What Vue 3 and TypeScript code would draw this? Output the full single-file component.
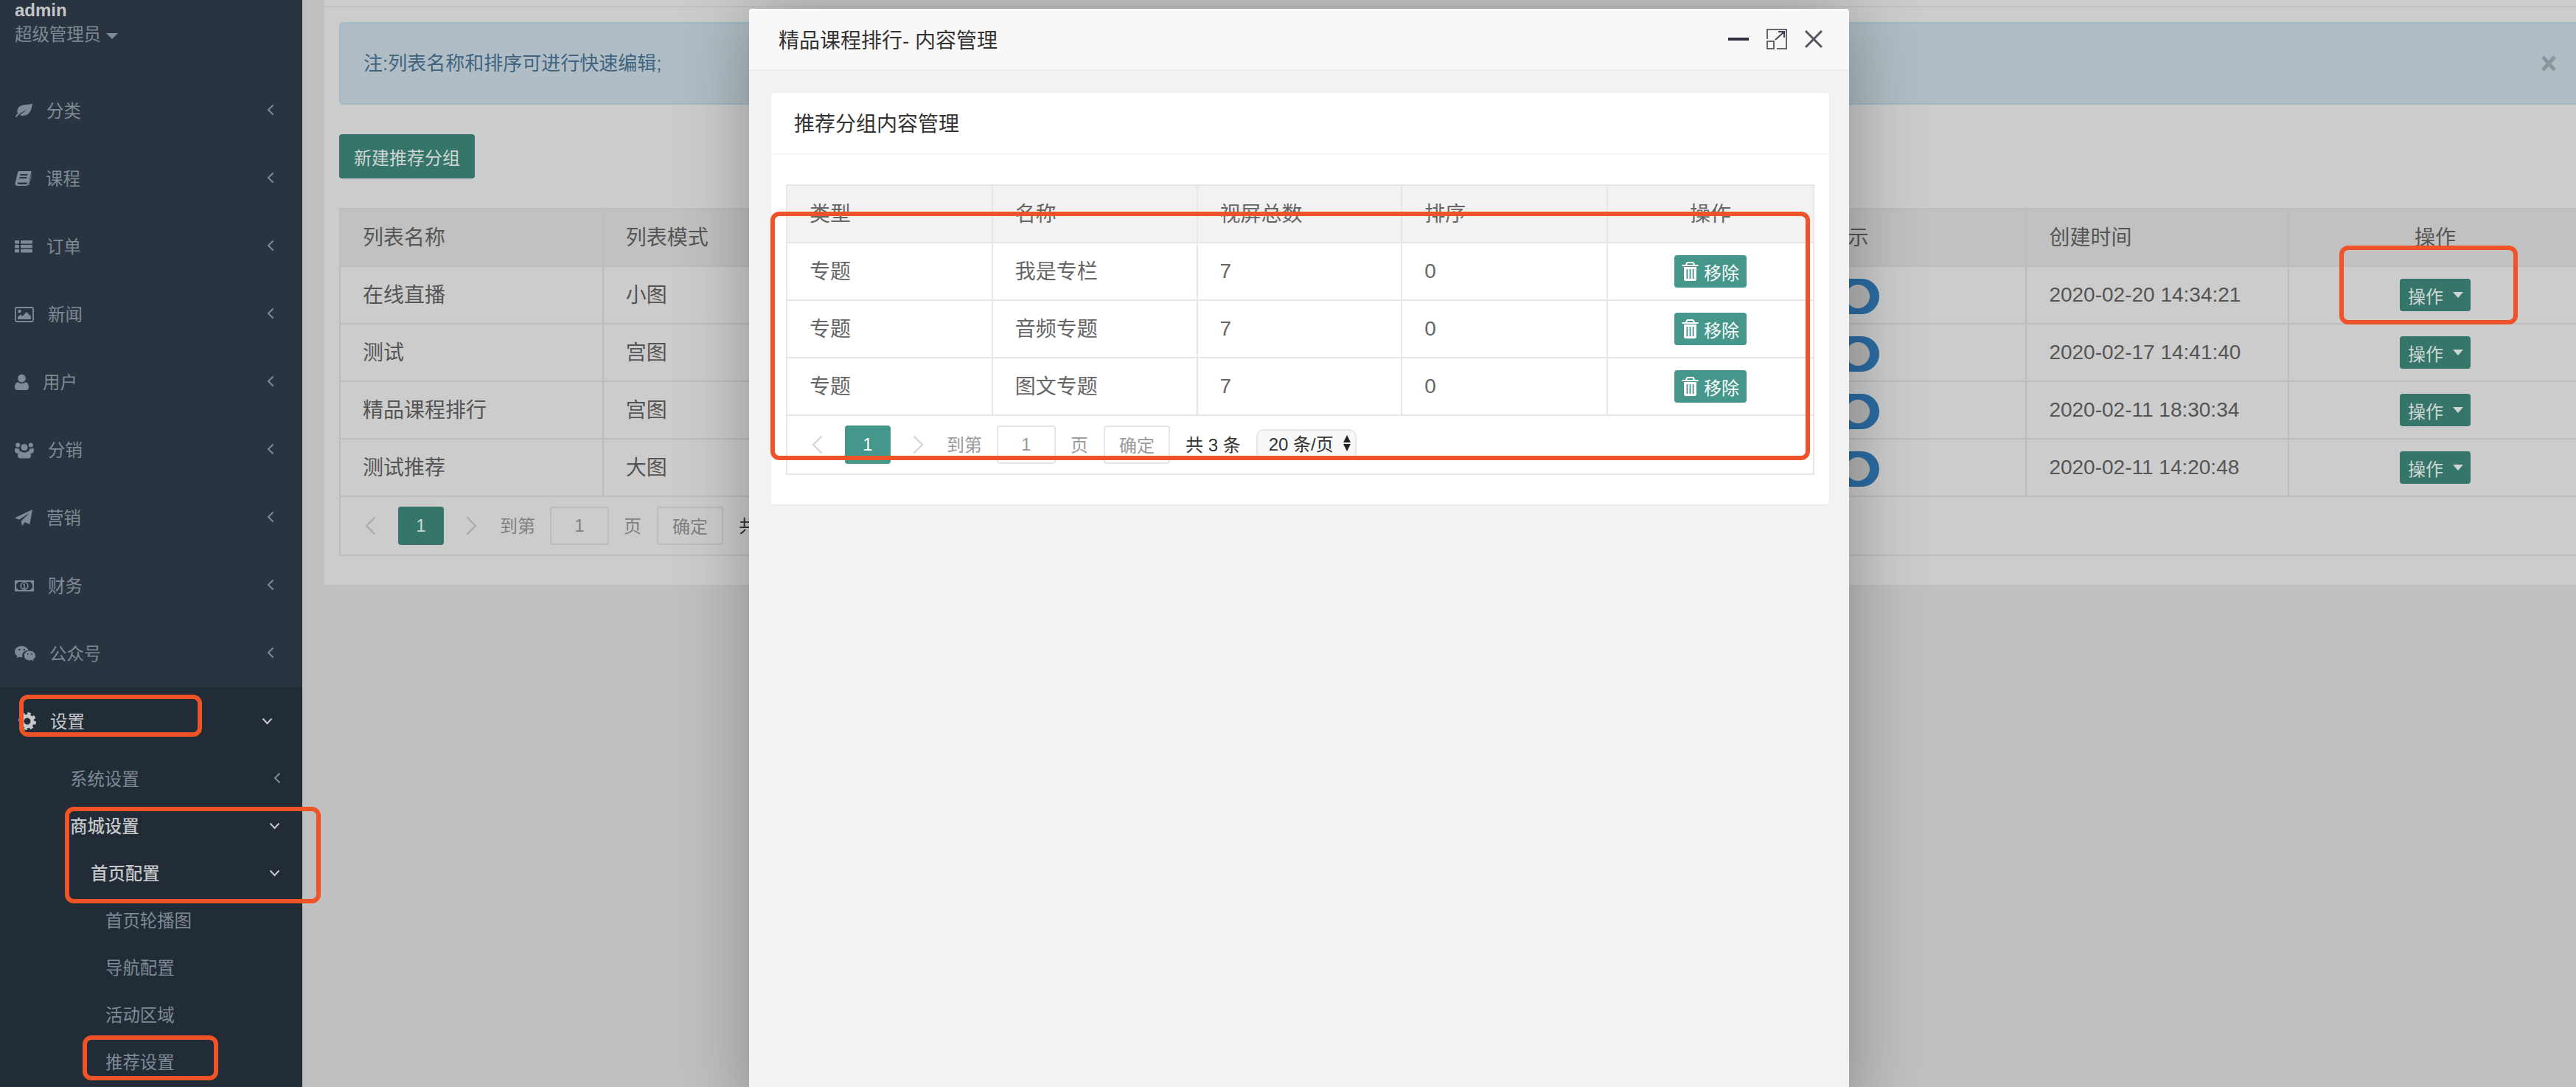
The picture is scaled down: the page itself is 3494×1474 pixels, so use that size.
<script setup lang="ts">
// 左侧菜单
const menus = [
  { name: '分类', icon: 'leaf', w: 24 },
  { name: '课程', icon: 'book', w: 23 },
  { name: '订单', icon: 'list', w: 24 },
  { name: '新闻', icon: 'image', w: 26 },
  { name: '用户', icon: 'user', w: 19 },
  { name: '分销', icon: 'users', w: 26 },
  { name: '营销', icon: 'send', w: 24 },
  { name: '财务', icon: 'money', w: 26 },
  { name: '公众号', icon: 'wechat', w: 28 },
]

const leafMenus = ['首页轮播图', '导航配置', '活动区域', '推荐设置']

const groups = [
  { name: '在线直播', mode: '小图', time: '2020-02-20 14:34:21' },
  { name: '测试', mode: '宫图', time: '2020-02-17 14:41:40' },
  { name: '精品课程排行', mode: '宫图', time: '2020-02-11 18:30:34' },
  { name: '测试推荐', mode: '大图', time: '2020-02-11 14:20:48' },
]

const contents = [
  { type: '专题', name: '我是专栏', total: 7, sort: 0 },
  { type: '专题', name: '音频专题', total: 7, sort: 0 },
  { type: '专题', name: '图文专题', total: 7, sort: 0 },
]
</script>

<template>
  <div class="page">
    <aside class="sidebar">
      <div class="profile">
        <div class="admin">admin</div>
        <div class="role">超级管理员<i class="caret"></i></div>
      </div>

      <ul class="menu">
        <li v-for="m in menus" :key="m.name" class="menu-item">
          <svg class="icon" :width="m.w" height="26" :viewBox="`0 0 ${m.w} 26`" fill="#7f8a96">
            <template v-if="m.icon === 'leaf'">
              <path d="M24 3c-1 1-2 1.3-4.500 1.500C12 5 5 5.500 3.500 12.500c-.3 1.500 0 3.200.7 4.400C2.900 18 1.600 19.400.6 21l1.800 1c.9-1.600 2.200-3 3.600-4.100 4-3.200 8-4.600 11-7.400-3 3.900-7 5.600-10 8.600 1 .6 2.300.9 3.900.9 8 0 12.600-7 13-16.900z" />
            </template>
            <template v-else-if="m.icon === 'book'">
              <path fill-rule="evenodd" d="M6 3h15.500c.8 0 1.200.7 1 1.500l-3.700 15c-.5 2-1.600 3.500-3.800 3.500H3.500C1.500 23 0 21.500.5 19.500L4 5c.3-1.200 1-2 2-2zm1.500 4-.5 2h10l.5-2zm-1 4-.5 2h10l.5-2zM4 18.500c-.5 1.500.2 2.500 1.500 2.500h9.300c1.400 0 2-.8 2.300-2 .1-.3.1-.5.2-.5z" />
              <path d="M22.700 7.500 23 8l-3 12.500c-.4 1.500-1.500 2.500-2.800 2.500 1-.6 1.500-1.500 1.800-2.800z" />
            </template>
            <template v-else-if="m.icon === 'list'">
              <rect x="0" y="5" width="6" height="4.500" rx="1" />
              <rect x="8" y="5" width="16" height="4.500" rx="1" />
              <rect x="0" y="11" width="6" height="4.500" rx="1" />
              <rect x="8" y="11" width="16" height="4.500" rx="1" />
              <rect x="0" y="17" width="6" height="4.500" rx="1" />
              <rect x="8" y="17" width="16" height="4.500" rx="1" />
            </template>
            <template v-else-if="m.icon === 'image'">
              <rect x="1" y="4" width="24" height="19" rx="1.500" fill="none" stroke="#7f8a96" stroke-width="1.800" />
              <circle cx="6.500" cy="9" r="2.300" />
              <path d="M4 20v-3l4-3.500 2.500 2.300L16 10l6 6v4z" />
            </template>
            <template v-else-if="m.icon === 'user'">
              <circle cx="9.500" cy="8" r="5.400" />
              <path d="M0 20.500c0-4 1.500-7 4.500-7.200 1.400 1.200 3 1.800 5 1.800s3.600-.6 5-1.800c3 .2 4.500 3.200 4.500 7.200 0 2.200-1.400 3.500-3.500 3.500h-12C1.400 24 0 22.700 0 20.500z" />
            </template>
            <template v-else-if="m.icon === 'users'">
              <circle cx="4.200" cy="6.500" r="3" />
              <circle cx="21.800" cy="6.500" r="3" />
              <circle cx="13" cy="9.500" r="4.600" />
              <path d="M0 13.500c0-2 .8-3 2-3 .6.600 1.400 1 2.500 1 .5 0 1-.1 1.500-.3-.2 1.500.4 2.800 1.300 3.800-1.300.6-2 1.500-2.500 3C2 18 0 16.500 0 13.500zM26 13.500c0-2-.8-3-2-3-.6.600-1.400 1-2.500 1-.5 0-1-.1-1.500-.3.200 1.500-.4 2.800-1.300 3.800 1.300.6 2 1.500 2.500 3 2.800 0 4.800-1.500 4.800-4.500z" />
              <path d="M4 21c0-3.500 1.500-6 4.500-6 1.200 1 2.700 1.500 4.500 1.500s3.300-.5 4.500-1.500c3 0 4.500 2.500 4.500 6 0 2.300-1.400 3.500-3.500 3.500h-11C5.400 24.500 4 23.300 4 21z" />
            </template>
            <template v-else-if="m.icon === 'send'">
              <path d="M24 2 20.300 22l-6.800-3L10.200 24.500 8.600 17.800 20 6.500 6 15.800 0 13.200z" />
            </template>
            <template v-else-if="m.icon === 'money'">
              <path fill-rule="evenodd" d="M0 6h26v15H0zm5 2-3 3v5l3 3h16l3-3v-5l-3-3z" />
              <circle cx="13" cy="13.500" r="4.800" fill="none" stroke="#7f8a96" stroke-width="1.600" />
              <path d="M12.400 10.500h1.300v5.600h1v1h-3.300v-1h1v-4l-1 .6v-1.100z" />
            </template>
            <template v-else-if="m.icon === 'wechat'">
              <path fill-rule="evenodd" d="M9.500 3C4.300 3 0 6.400 0 10.700c0 2.500 1.400 4.500 3.600 6l-.9 2.700 3.200-1.600c1.200.3 2.300.5 3.600.5l.9-.1c-.2-.7-.3-1.400-.3-2.100 0-4 3.500-7.200 8-7.200h.9C17.100 5.600 13.600 3 9.500 3zM6.300 6.700a1.200 1.200 0 1 1 0 2.400 1.200 1.200 0 0 1 0-2.400zm6.500 0a1.200 1.200 0 1 1 0 2.400 1.200 1.200 0 0 1 0-2.400z" />
              <path fill-rule="evenodd" d="M28 16c0-3.600-3.600-6.500-7.600-6.500-4.300 0-7.700 2.900-7.700 6.500s3.400 6.500 7.700 6.500c.9 0 1.800-.2 2.700-.5l2.500 1.400-.7-2.300c2.100-1.300 3.600-3.500 3.600-5.100zm-10.200-1.200a1 1 0 1 1 0-2 1 1 0 0 1 0 2zm5.100 0a1 1 0 1 1 0-2 1 1 0 0 1 0 2z" />
            </template>
          </svg>
          <span class="menu-text">{{ m.name }}</span>
          <svg class="chev" width="10" height="16" viewBox="0 0 10 16"><path d="M8.500 1.500 2 8l6.500 6.500" /></svg>
        </li>

        <li class="open-group">
          <div class="menu-item active">
            <svg class="icon" width="29" height="26" viewBox="0 0 29 26">
              <circle cx="17" cy="13" r="7" fill="none" stroke="#c6c8ca" stroke-width="5" />
              <circle cx="17" cy="13" r="10" fill="none" stroke="#c6c8ca" stroke-width="4" stroke-dasharray="4.200 3.650" />
            </svg>
            <span class="menu-text">设置</span>
            <svg class="chev-down top" width="15" height="10" viewBox="0 0 15 10"><path d="M1.500 1.500 7.500 8l6-6.500" /></svg>
          </div>
          <div class="sub-item lv2">
            <span>系统设置</span>
            <svg class="chev sub" width="10" height="16" viewBox="0 0 10 16"><path d="M8.500 1.500 2 8l6.500 6.500" /></svg>
          </div>
          <div class="sub-item lv2 on">
            <span>商城设置</span>
            <svg class="chev-down" width="15" height="10" viewBox="0 0 15 10"><path d="M1.500 1.500 7.500 8l6-6.500" /></svg>
          </div>
          <div class="sub-item lv3 on">
            <span>首页配置</span>
            <svg class="chev-down" width="15" height="10" viewBox="0 0 15 10"><path d="M1.500 1.500 7.500 8l6-6.500" /></svg>
          </div>
          <div v-for="s in leafMenus" :key="s" class="sub-item lv4"><span>{{ s }}</span></div>
        </li>
      </ul>
    </aside>

    <main class="main">
      <section class="card">
        <div class="card-top"></div>
        <div class="alert">
          <span class="alert-text">注:列表名称和排序可进行快速编辑;</span>
          <svg width="22" height="22" viewBox="0 0 22 22" class="alert-close"><path d="M3 2l16 18M19 2 3 20" /></svg>
        </div>
        <button class="btn-new">新建推荐分组</button>

        <table class="grid dim">
          <colgroup>
            <col style="width: 357px" />
            <col style="width: 1575px" />
            <col style="width: 357px" />
            <col style="width: 356px" />
            <col style="width: 398px" />
          </colgroup>
          <thead>
            <tr>
              <th>列表名称</th>
              <th>列表模式</th>
              <th>是否显示</th>
              <th>创建时间</th>
              <th class="center">操作</th>
            </tr>
          </thead>
          <tbody>
            <tr v-for="g in groups" :key="g.time">
              <td>{{ g.name }}</td>
              <td>{{ g.mode }}</td>
              <td class="switch-cell"><span class="switch"><i></i></span></td>
              <td class="num">{{ g.time }}</td>
              <td class="center"><button class="btn-op">操作<i class="op-caret"></i></button></td>
            </tr>
          </tbody>
        </table>
        <div class="pager dim">
          <svg class="pg-chev prev" width="15" height="26" viewBox="0 0 15 26"><path d="M13.500 1.500 2 13l11.500 11.500" /></svg>
          <span class="pg-cur">1</span>
          <svg class="pg-chev next" width="15" height="26" viewBox="0 0 15 26"><path d="M1.500 1.500 13 13 1.500 24.500" /></svg>
          <span class="pg-to">到第</span>
          <span class="pg-input">1</span>
          <span class="pg-unit">页</span>
          <span class="pg-ok">确定</span>
          <span class="pg-total">共 3 条</span>
        </div>
      </section>
    </main>

    <div class="modal">
      <header class="modal-head">
        <span>精品课程排行- 内容管理</span>
        <div class="modal-tools">
          <svg width="28" height="28" viewBox="0 0 28 28"><rect x="0" y="12" width="28" height="4" fill="#2f2f3f" /></svg>
          <svg width="28" height="28" viewBox="0 0 28 28" fill="none" stroke="#66666f" stroke-width="2">
            <path d="M1 14V1h26v26H14" />
            <rect x="1" y="17" width="9" height="10" stroke-width="2" />
            <path d="M12 15 24 4M16 4h8v8" stroke="#45454f" />
          </svg>
          <svg width="24" height="24" viewBox="0 0 24 24" fill="none" stroke="#55555f" stroke-width="3"><path d="M1 1l22 22M23 1 1 23" /></svg>
        </div>
      </header>
      <div class="modal-body">
        <section class="inner-card">
          <div class="inner-head">推荐分组内容管理</div>
          <div class="inner-body">
            <table class="grid">
              <colgroup>
                <col style="width: 279px" />
                <col style="width: 278px" />
                <col style="width: 278px" />
                <col style="width: 279px" />
                <col style="width: 280px" />
              </colgroup>
              <thead>
                <tr>
                  <th>类型</th>
                  <th>名称</th>
                  <th>视屏总数</th>
                  <th>排序</th>
                  <th class="center">操作</th>
                </tr>
              </thead>
              <tbody>
                <tr v-for="c in contents" :key="c.name">
                  <td>{{ c.type }}</td>
                  <td>{{ c.name }}</td>
                  <td class="num">{{ c.total }}</td>
                  <td class="num">{{ c.sort }}</td>
                  <td class="center">
                    <button class="btn-remove">
                      <svg width="23" height="26" viewBox="0 0 23 26" fill="#fff">
                        <path d="M8 0h7c1 0 1.600.7 2 1.500L18 4h4.500v2H.5V4H5l1-2.500C6.400.7 7 0 8 0zm0 2-.8 2h8.600L15 2z" />
                        <path fill-rule="evenodd" d="M3 7h17v16.500c0 1.400-1 2.500-2.300 2.500H5.300C4 26 3 24.900 3 23.500zm3.500 3v13h1.800V10zm4.100 0v13h1.800V10zm4.100 0v13h1.800V10z" />
                      </svg>
                      <span>移除</span>
                    </button>
                  </td>
                </tr>
              </tbody>
            </table>
            <div class="pager">
              <svg class="pg-chev prev" width="15" height="26" viewBox="0 0 15 26"><path d="M13.500 1.500 2 13l11.500 11.500" /></svg>
              <span class="pg-cur">1</span>
              <svg class="pg-chev next" width="15" height="26" viewBox="0 0 15 26"><path d="M1.500 1.500 13 13 1.500 24.500" /></svg>
              <span class="pg-to">到第</span>
              <span class="pg-input">1</span>
              <span class="pg-unit">页</span>
              <span class="pg-ok">确定</span>
              <span class="pg-total">共 3 条</span>
              <span class="pg-size">20 条/页<i class="arrows"></i></span>
            </div>
          </div>
        </section>
      </div>
    </div>

    <!-- 红框标注 -->
    <div class="mark mark-setting"></div>
    <div class="mark mark-mall"></div>
    <div class="mark mark-recommend"></div>
    <div class="mark mark-table"></div>
    <div class="mark mark-op"></div>
  </div>
</template>

<style>
html,
body {
  margin: 0;
  overflow: hidden;
}
</style>

<style scoped>
.page {
  position: relative;
  display: flex;
  width: 3494px;
  height: 1474px;
  overflow: hidden;
  background: #c0c0c0;
  font-family: "Liberation Sans", "Noto Sans CJK SC", sans-serif;
}

ul {
  list-style: none;
  margin: 0;
  padding: 0;
}

/* sidebar */
.sidebar {
  flex: 0 0 410px;
  height: 100%;
  background: #2a3440;
  color: #7f8a96;
}

.profile {
  height: 104px;
  padding-left: 20px;
  box-sizing: border-box;
}

.admin {
  font-size: 24px;
  font-weight: 700;
  line-height: 28px;
  color: #c2c4c6;
}

.role {
  display: flex;
  align-items: center;
  margin-top: 7px;
  font-size: 23.400px;
  line-height: 24px;
  color: #7f8a96;
}

.caret {
  width: 0;
  height: 0;
  margin-left: 7px;
  margin-top: 4px;
  border-left: 8px solid transparent;
  border-right: 8px solid transparent;
  border-top: 8px solid #7f8a96;
}

.menu-item {
  display: flex;
  align-items: center;
  height: 92px;
  padding-left: 20px;
  font-size: 23.400px;
}

.icon {
  flex: none;
  margin-right: 19px;
}

.menu-text {
  flex: 1;
  padding-bottom: 3px;
}

.chev {
  margin-right: 38px;
  margin-top: -2px;
}

.chev path,
.chev-down path {
  fill: none;
  stroke: #7f8a96;
  stroke-width: 2;
}

.open-group {
  height: 541px;
  background: #222c37;
}

.active {
  color: #c6c8ca;
}

.chev-down.top {
  margin-right: 40px;
}

.active .chev-down path,
.on .chev-down path {
  stroke: #c6c8ca;
}

.sub-item {
  display: flex;
  align-items: center;
  justify-content: space-between;
  height: 64px;
  font-size: 23.400px;
  box-sizing: border-box;
  padding-right: 30px;
}

.sub-item span {
  padding-bottom: 3px;
}

.chev.sub {
  margin-right: -1px;
}

.lv2 {
  padding-left: 95px;
}

.lv3 {
  padding-left: 123px;
}

.lv4 {
  padding-left: 143px;
}

.on {
  color: #c6c8ca;
  font-weight: 500;
}

/* main */
.main {
  flex: 1;
  padding-left: 30px;
  min-width: 0;
}

.card {
  width: 3083px;
  height: 793px;
  padding: 0 20px;
  box-sizing: border-box;
  background: #cccccc;
  border-radius: 0 0 4px 4px;
}

.card-top {
  height: 8px;
  margin: 0 -20px 20px;
  border-bottom: 2px solid #c2c2c2;
}

.alert {
  display: flex;
  align-items: center;
  justify-content: space-between;
  height: 112px;
  padding: 0 33px 0 31px;
  box-sizing: border-box;
  background: #b0bdc4;
  border: 2px solid #9fbcc7;
  border-radius: 6px;
  color: #3e6481;
  font-size: 26px;
}

.alert-text {
  padding-bottom: 6px;
}

.alert-close path {
  fill: none;
  stroke: #8c969c;
  stroke-width: 5;
}

.btn-new {
  display: block;
  width: 184px;
  height: 60px;
  margin: 40px 0;
  padding: 0;
  border: 0;
  border-radius: 4px;
  background: #35756a;
  color: #cfd5d3;
  font-family: inherit;
  font-size: 24px;
}

/* tables */
.grid {
  table-layout: fixed;
  border-collapse: collapse;
  color: #666;
  font-size: 28px;
}

.grid th,
.grid td {
  height: 78px;
  padding: 0 0 4px 30px;
  box-sizing: border-box;
  border: 2px solid #e6e6e6;
  font-weight: 400;
  text-align: left;
}

.grid th {
  background: #f2f2f2;
}

.grid td.num {
  padding-bottom: 0;
}

.grid .center {
  padding: 0;
  text-align: center;
}

.grid th.center {
  padding-bottom: 4px;
}

.grid .switch-cell {
  padding-top: 4px;
  padding-bottom: 0;
}

.dim {
  color: #555;
}

.dim th,
.dim td {
  border-color: #bcbcbc;
}

.dim th {
  background: #c1c1c1;
}

.switch {
  position: relative;
  display: block;
  width: 100px;
  height: 48px;
  margin-left: 26px;
  border-radius: 24px;
  background: #2b6ca3;
}

.switch i {
  position: absolute;
  right: 13px;
  top: 8px;
  width: 32px;
  height: 32px;
  border-radius: 50%;
  background: #b6b6b6;
}

.btn-op {
  display: inline-flex;
  align-items: center;
  width: 96px;
  height: 44px;
  padding: 0 0 0 11px;
  border: 0;
  border-radius: 4px;
  background: #35756a;
  color: #cfd5d3;
  font-family: inherit;
  font-size: 24px;
  vertical-align: middle;
}

.op-caret {
  width: 0;
  height: 0;
  margin-left: 13px;
  border-left: 7px solid transparent;
  border-right: 7px solid transparent;
  border-top: 8px solid #cfd5d3;
}

/* pager */
.pager {
  display: flex;
  align-items: center;
  height: 80px;
  box-sizing: border-box;
  border: 2px solid #e6e6e6;
  border-top: 0;
  font-size: 24px;
  color: #999;
}

.pager.dim {
  width: 3043px;
  border-color: #bcbcbc;
  color: #808080;
}

.pg-chev path {
  fill: none;
  stroke: #d2d2d2;
  stroke-width: 2;
}

.dim .pg-chev path {
  stroke: #a8a8a8;
}

.prev {
  margin-left: 33px;
}

.pg-cur {
  width: 62px;
  height: 52px;
  margin-left: 30px;
  border-radius: 4px;
  background: #44978a;
  color: #fff;
  text-align: center;
  line-height: 52px;
}

.dim .pg-cur {
  background: #35756a;
  color: #cfd5d3;
}

.next {
  margin-left: 30px;
}

.pg-to,
.pg-unit,
.pg-total {
  padding-bottom: 4px;
}

.pg-to {
  margin-left: 31px;
}

.pg-input,
.pg-ok {
  height: 52px;
  box-sizing: border-box;
  border: 2px solid #e6e6e6;
  border-radius: 4px;
  text-align: center;
  line-height: 48px;
}

.dim .pg-input,
.dim .pg-ok {
  border-color: #bcbcbc;
}

.pg-input {
  width: 80px;
  margin-left: 20px;
}

.pg-unit {
  margin-left: 20px;
}

.pg-ok {
  width: 90px;
  margin-left: 21px;
  line-height: 52px;
}

.pg-total {
  margin-left: 21px;
  color: #333;
}

.pg-size {
  position: relative;
  width: 136px;
  height: 42px;
  margin-left: 21px;
  padding-left: 15px;
  box-sizing: border-box;
  border: 2px solid #e6e6e6;
  border-radius: 10px;
  background: #f8f8f8;
  color: #333;
  line-height: 38px;
}

.arrows {
  position: absolute;
  right: 6px;
  top: 6px;
  width: 0;
  height: 0;
  border-left: 5px solid transparent;
  border-right: 5px solid transparent;
  border-bottom: 10px solid #222;
}

.arrows::after {
  content: "";
  position: absolute;
  left: -5px;
  top: 12px;
  width: 0;
  height: 0;
  border-left: 5px solid transparent;
  border-right: 5px solid transparent;
  border-top: 10px solid #222;
}

/* modal */
.modal {
  position: absolute;
  left: 1016px;
  top: 12px;
  width: 1492px;
  height: 1500px;
  background: #f2f2f2;
  border-radius: 4px 4px 0 0;
  box-shadow: 2px 2px 100px rgba(0, 0, 0, 0.3);
}

.modal-head {
  display: flex;
  align-items: center;
  justify-content: space-between;
  height: 84px;
  padding: 0 36px 0 40px;
  box-sizing: border-box;
  background: #f8f8f8;
  border-bottom: 2px solid #eeeeee;
  border-radius: 4px 4px 0 0;
  color: #333;
  font-size: 28px;
}

.modal-tools {
  display: flex;
  align-items: center;
  gap: 24px;
}

.modal-body {
  padding: 30px 27px 0 30px;
}

.inner-card {
  background: #fff;
  border-radius: 4px;
  box-shadow: 0 1px 2px rgba(0, 0, 0, 0.04);
}

.inner-head {
  height: 84px;
  padding-left: 31px;
  box-sizing: border-box;
  border-bottom: 2px solid #f6f6f6;
  color: #333;
  font-size: 28px;
  line-height: 85px;
}

.inner-body {
  padding: 40px 20px;
}

.btn-remove {
  display: inline-flex;
  align-items: center;
  justify-content: center;
  gap: 7px;
  width: 98px;
  height: 44px;
  padding: 0;
  border: 0;
  border-radius: 4px;
  background: #44978a;
  color: #fff;
  font-family: inherit;
  font-size: 24px;
  vertical-align: middle;
}

/* annotations */
.mark {
  position: absolute;
  box-sizing: border-box;
  border: 6px solid #f05327;
  border-radius: 12px;
}

.mark-setting {
  left: 26px;
  top: 942px;
  width: 248px;
  height: 57px;
}

.mark-mall {
  left: 88px;
  top: 1094px;
  width: 347px;
  height: 131px;
}

.mark-recommend {
  left: 112px;
  top: 1404px;
  width: 184px;
  height: 61px;
}

.mark-table {
  left: 1045px;
  top: 287px;
  width: 1410px;
  height: 337px;
}

.mark-op {
  left: 3173px;
  top: 333px;
  width: 242px;
  height: 107px;
}
</style>
